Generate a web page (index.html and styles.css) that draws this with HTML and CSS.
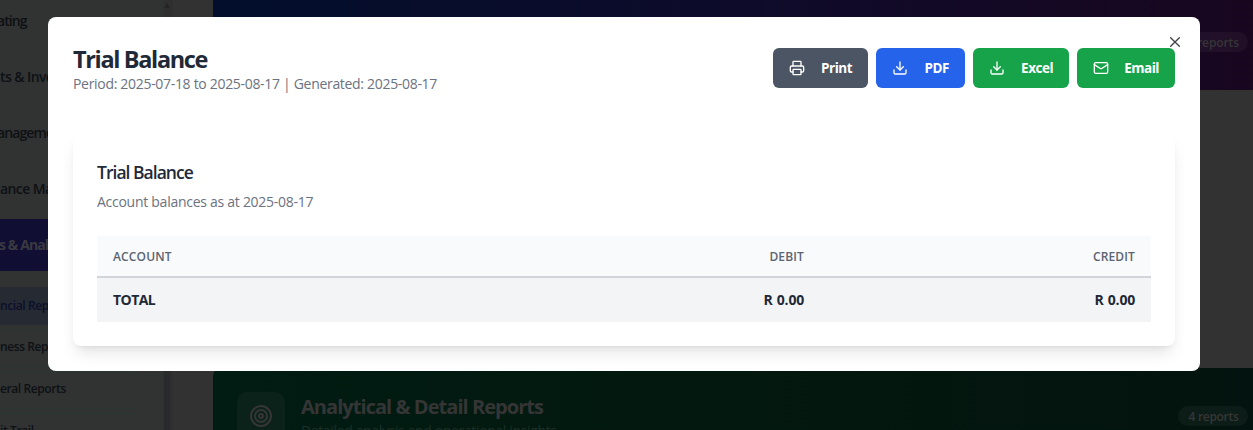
FILE: index.html
```html
<!DOCTYPE html>
<html lang="en">
<head>
<meta charset="utf-8">
<title>Trial Balance</title>
<link rel="stylesheet" href="styles.css">
</head>
<body>
<div class="page">
  <aside class="sidebar">
    <nav class="nav">
      <div class="nav-item n1">ating</div>
      <div class="nav-item n2">ts &amp; Inve</div>
      <div class="nav-item n3">anageme</div>
      <div class="nav-item n4">ance Ma</div>
      <div class="nav-item n5 active">s &amp; Anal</div>
      <div class="subnav">
        <div class="sub s1 selected">ncial Rep</div>
        <div class="sub s2">ness Rep</div>
        <div class="sub s3">eral Reports</div>
        <div class="sub s4">it Trail</div>
      </div>
    </nav>
    <div class="scrollbar"><i class="arrow"></i><i class="thumb"></i></div>
  </aside>
  <main class="content">
    <section class="banner financial"><span class="pill">5 reports</span></section>
    <section class="banner analytical">
      <div class="banner-icon">
        <svg width="24" height="24" viewBox="0 0 24 24" fill="none" stroke="currentColor" stroke-width="2"><circle cx="12" cy="12" r="10"/><circle cx="12" cy="12" r="6"/><circle cx="12" cy="12" r="2"/></svg>
      </div>
      <div class="banner-text">
        <h2>Analytical &amp; Detail Reports</h2>
        <p>Detailed analysis and operational insights</p>
      </div>
      <span class="pill">4 reports</span>
    </section>
  </main>
</div>

<div class="modal">
  <button class="close" aria-label="Close">
    <svg width="16" height="16" viewBox="0 0 24 24" fill="none" stroke="currentColor" stroke-width="2" stroke-linecap="round"><path d="M18.5 5.5 5.5 18.5M5.5 5.5l13 13"/></svg>
  </button>
  <header class="modal-head">
    <div>
      <h1 class="title">Trial Balance</h1>
      <p class="period">Period: 2025-07-18 to 2025-08-17 | Generated: 2025-08-17</p>
    </div>
    <div class="actions">
      <button class="btn print">
        <svg class="ico" viewBox="0 0 24 24"><path d="M6 18H4a2 2 0 0 1-2-2v-5a2 2 0 0 1 2-2h16a2 2 0 0 1 2 2v5a2 2 0 0 1-2 2h-2"/><path d="M6 9V3a1 1 0 0 1 1-1h10a1 1 0 0 1 1 1v6"/><rect x="6" y="14" width="12" height="8" rx="1"/></svg>
        <span>Print</span>
      </button>
      <button class="btn pdf">
        <svg class="ico" viewBox="0 0 24 24"><path d="M21 15v4a2 2 0 0 1-2 2H5a2 2 0 0 1-2-2v-4"/><path d="m7 10 5 5 5-5"/><path d="M12 15V3"/></svg>
        <span>PDF</span>
      </button>
      <button class="btn excel">
        <svg class="ico" viewBox="0 0 24 24"><path d="M21 15v4a2 2 0 0 1-2 2H5a2 2 0 0 1-2-2v-4"/><path d="m7 10 5 5 5-5"/><path d="M12 15V3"/></svg>
        <span>Excel</span>
      </button>
      <button class="btn email">
        <svg class="ico" viewBox="0 0 24 24"><rect x="2" y="4" width="20" height="16" rx="2"/><path d="m22 7-8.97 5.7a1.94 1.94 0 0 1-2.06 0L2 7"/></svg>
        <span>Email</span>
      </button>
    </div>
  </header>
  <section class="card">
    <h3 class="card-title">Trial Balance</h3>
    <p class="card-sub">Account balances as at 2025-08-17</p>
    <div class="table">
      <div class="row head"><span>ACCOUNT</span><span>DEBIT</span><span>CREDIT</span></div>
      <div class="row total"><span>TOTAL</span><span>R 0.00</span><span>R 0.00</span></div>
    </div>
  </section>
</div>
</body>
</html>
```
FILE: styles.css
```css
* { box-sizing: border-box; margin: 0; padding: 0; }
body {
  width: 1253px; height: 430px; overflow: hidden;
  font-family: "Open Sans", "Noto Sans", sans-serif;
  background: #323232; color: #1f2937;
}
.page { display: flex; width: 1253px; height: 430px; overflow: hidden; }

.sidebar { display: flex; width: 173px; height: 430px; overflow: hidden; background: #313332; flex: none; }
.nav { width: 163px; flex: none; margin-top: -5px; }
.nav-item {
  height: 52px; margin-bottom: 4px; line-height: 52px; white-space: nowrap;
  font-size: 14px; font-weight: 600; letter-spacing: -0.6px; color: #0d1015;
}
.n1 { letter-spacing: -0.9px; text-indent: -3px; }
.n3 { text-indent: -3px; letter-spacing: -0.9px; }
.active { background: linear-gradient(90deg, #100e32, #150f3a); color: #3a3940; font-weight: 700; letter-spacing: -0.9px; text-indent: -1px; }
.subnav { display: flex; flex-direction: column; gap: 4px; width: 138px; margin-top: 16px; }
.sub {
  height: 38px; line-height: 34px; white-space: nowrap; font-size: 12px; font-weight: 600;
  letter-spacing: -0.4px; color: #0d1015;
  border: 1px solid #2a3731; border-left: 0; border-radius: 0 6px 6px 0;
}
.sub.selected { background: #262a33; border-color: #262a33; color: #0b0f29; line-height: 35px; }
.scrollbar { width: 10px; background: #2f2f2f; display: flex; flex-direction: column; }
.arrow { width: 0; height: 0; margin: 3px 0 0 1px; border: 3px solid transparent; border-top: 0; border-bottom: 5px solid #252525; }
.thumb { flex: 1; margin-top: 12px; width: 6px; background: #292a2c; margin-left: 1px; }

.content { flex: 1; padding-left: 40px; display: flex; flex-direction: column; gap: 278px; }
.banner { flex: none; display: flex; width: 1060px; color: #353535; }
.financial { height: 90px; padding: 32px 0 0 954px; align-items: flex-start; background: linear-gradient(90deg, #020e2c, #0e0b2a 50%, #19061f); }
.analytical {
  height: 100px; padding: 24px 0 0 24px; border-radius: 8px 0 0 0; align-items: flex-start;
  background: linear-gradient(90deg, #011c13, #03180e 50%, #03130f);
}
.banner-icon { width: 48px; height: 48px; border-radius: 10px; background: #0a221a; display: flex; align-items: center; justify-content: center; flex: none; }
.banner-text { width: 893px; padding-left: 16px; flex: none; }
.banner h2 { font-size: 20px; line-height: 28px; letter-spacing: -0.95px; font-weight: 700; padding-top: 1px; }
.banner p { font-size: 14px; line-height: 20px; letter-spacing: -0.36px; color: #1c2f27; }
.pill {
  width: 70px; height: 20px; line-height: 21px; border-radius: 10px; text-align: center; flex: none;
  font-size: 12px; font-weight: 600; letter-spacing: -0.3px; color: #363636; background: rgba(255,255,255,.04);
}
.analytical .pill { margin-top: 14px; padding-left: 1px; }
.financial .pill { width: 81px; text-align: right; padding-right: 9px; letter-spacing: -0.1px; }

.modal {
  position: absolute; left: 48px; top: 17px; width: 1152px; height: 354px; padding: 25px;
  background: #fff; border-radius: 8px;
}
.close { position: absolute; right: 17px; top: 17px; width: 16px; height: 16px; border: 0; background: none; color: #3f4348; }
.close svg { display: block; }
.modal-head { display: flex; justify-content: space-between; align-items: flex-start; height: 92px; }
.title { font-size: 23.5px; line-height: 32px; letter-spacing: -1.35px; font-weight: 700; padding-top: 1px; }
.period { font-size: 14px; line-height: 20px; letter-spacing: -0.31px; color: #6b7280; margin-top: -1px; }
.actions { display: flex; gap: 8px; padding-top: 6px; }
.btn {
  height: 40px; border: 0; border-radius: 6px; color: #fff; padding: 0 16px;
  display: flex; align-items: center; justify-content: space-between;
  font-family: inherit; font-size: 13.5px; font-weight: 700; letter-spacing: -0.5px;
}
.ico { width: 16px; height: 16px; fill: none; stroke: currentColor; stroke-width: 2; stroke-linecap: round; stroke-linejoin: round; }
.print { width: 95px; background: #4b5563; }
.pdf { width: 89px; background: #2563eb; }
.excel { width: 96px; background: #16a34a; }
.email { width: 98px; background: #16a34a; }

.card {
  width: 1102px; height: 212px; padding: 24px; border-radius: 8px; background: #fff;
  box-shadow: 0 10px 15px -3px rgba(0,0,0,.1), 0 4px 6px -4px rgba(0,0,0,.1);
}
.card-title { font-size: 17.5px; line-height: 28px; font-weight: 600; letter-spacing: -0.98px; }
.card-sub { font-size: 14px; line-height: 20px; letter-spacing: -0.27px; color: #6b7280; margin-top: 6px; }
.table { margin-top: 24px; }
.row { display: grid; grid-template-columns: 392px 331px 331px; }
.row span { padding: 0 16px; text-align: right; }
.row span:first-child { text-align: left; }
.head { height: 42px; line-height: 42px; background: #f9fafb; border-bottom: 2px solid #d1d5db; font-size: 12px; font-weight: 600; letter-spacing: .15px; color: #5b6472; }
.total { height: 44px; line-height: 44px; background: #f3f4f6; font-size: 14px; font-weight: 700; letter-spacing: -0.2px; word-spacing: 0.8px; }
.total span:first-child { letter-spacing: -0.55px; }
```
